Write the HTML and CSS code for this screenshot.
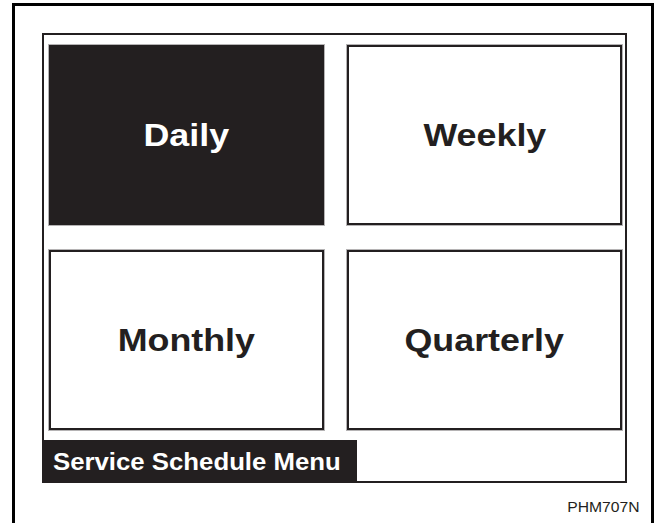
FILE: index.html
```html
<!DOCTYPE html>
<html lang="en">
<head>
    <meta charset="UTF-8">
    <meta name="viewport" content="width=device-width, initial-scale=1.0">
    <title>Service Schedule Menu</title>
    <link rel="stylesheet" href="styles.css">
</head>
<body>

    <div class="figure">

        <!-- Pantalla del menu -->
        <div class="screen">
            <div class="tiles">
                <div class="tile selected"><span class="word">Daily</span></div>
                <div class="tile"><span class="word">Weekly</span></div>
                <div class="tile"><span class="word">Monthly</span></div>
                <div class="tile"><span class="word">Quarterly</span></div>
            </div>
            <div class="title-bar"><span class="title-text">Service Schedule Menu</span></div>
        </div>

        <div class="fig-code"><span class="code-text">PHM707N</span></div>
    </div>

</body>
</html>
```

FILE: styles.css
```css
body {
    margin: 0;
    font-family: "Liberation Sans", Arial, sans-serif;
    background-color: #fff;
    color: #231f20;
    overflow: hidden;
}

.figure {
    margin: 3px 1px 0 12px;
    height: 530px;
    border: 3px solid #000;
    border-bottom: none;
    box-sizing: border-box;
    padding: 27px 0 0 27px;
}

.screen {
    width: 585px;
    height: 450px;
    box-sizing: border-box;
    border: 2px solid #231f20;
    padding: 10px 3px 0 5px;
}

.tiles {
    display: grid;
    grid-template-columns: 275px 275px;
    grid-template-rows: 180px 180px;
    column-gap: 23px;
    row-gap: 25px;
}

.tile {
    border: 2px solid #231f20;
    box-shadow: 0 0 0 1px #b5b3b4;
    display: flex;
    align-items: center;
    justify-content: center;
    background-color: #fff;
}

.tile.selected {
    background-color: #231f20;
    color: #fff;
}

.word {
    display: inline-block;
    font-size: 32px;
    font-weight: bold;
    transform: scaleX(1.12);
}

.title-bar {
    margin: 10px 0 -2px -7px;
    width: 315px;
    height: 43px;
    background-color: #231f20;
    color: #fff;
    display: flex;
    align-items: center;
    padding-left: 11px;
    box-sizing: border-box;
}

.title-text {
    display: inline-block;
    font-size: 23px;
    font-weight: bold;
    transform: scaleX(1.12);
    transform-origin: left center;
    padding-top: 2px;
}

.fig-code {
    display: flex;
    justify-content: flex-end;
    padding-right: 11px;
    margin-top: 16px;
}

.code-text {
    display: inline-block;
    font-size: 14px;
    transform: scaleX(1.12);
    transform-origin: right center;
}
```
